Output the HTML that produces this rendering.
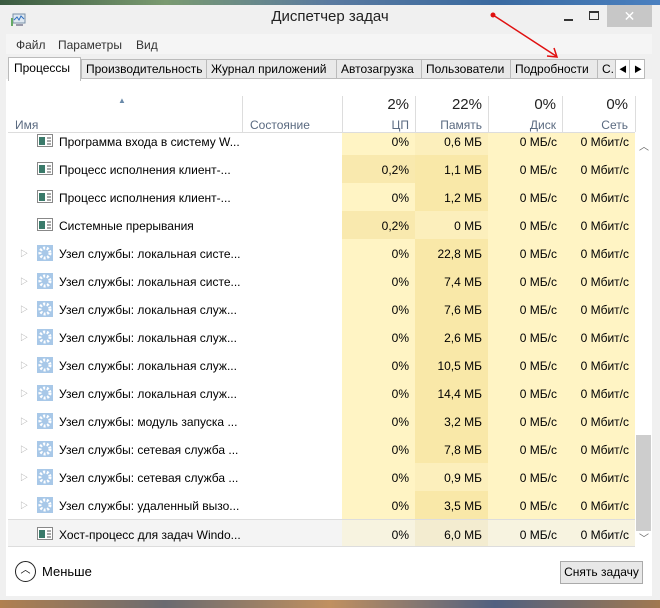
<!DOCTYPE html>
<html><head><meta charset="utf-8"><style>
*{margin:0;padding:0;box-sizing:border-box}
body{width:660px;height:608px;overflow:hidden;background:#8a7a60;font-family:"Segoe UI","Liberation Sans","Noto Sans CJK SC",sans-serif;font-size:12px;color:#000;position:relative}
.abs{position:absolute}
#top{left:0;top:0;width:660px;height:5px;background:linear-gradient(90deg,#3a5a40,#7a9a70,#5a7aa0,#3a6aa0,#4a80c0)}
#bot{left:0;top:600px;width:660px;height:8px;background:linear-gradient(90deg,#b08050,#6a6a70,#c09060,#506080,#a07850)}
#win{left:0;top:5px;width:660px;height:595px;background:#f0f0f0}
#title{left:0;top:8px;width:660px;text-align:center;font-size:15px;color:#222}
#menu{left:6px;top:34px;width:646px;height:20px;background:#f5f5f5}
#menu span{position:absolute;top:4px;color:#333;font-size:12px}
.tab{position:absolute;top:59px;height:20px;background:#e9e9e9;border:1px solid #bbb;font-size:12px;padding:2px 4px;white-space:nowrap;overflow:hidden}
#panel{left:6px;top:79px;width:646px;height:517px;background:#fff}
.colh{position:absolute;font-size:12px;color:#5a6a80}
.pct{position:absolute;font-size:15px;color:#222;text-align:right}
.row{position:absolute;left:8px;width:627px;height:28px}
.row span{position:absolute;top:8px;white-space:nowrap}
.c{position:absolute;top:0;height:28px}
</style></head><body>
<div id="top" class="abs"></div>
<div id="win" class="abs"></div>
<div id="bot" class="abs"></div>
<svg class="abs" style="left:10px;top:13px" width="16" height="14"><rect x="3" y="1" width="12" height="9" fill="#dfe8f0" stroke="#7890a8"/><polyline points="4,7 7,4 9,7 11,3 14,6" fill="none" stroke="#3070c0"/><rect x="1" y="5" width="2" height="8" fill="#6a6"/><rect x="6" y="11" width="7" height="2" fill="#99a"/></svg>
<div id="title" class="abs">Диспетчер задач</div>
<div class="abs" style="left:564px;top:19px;width:9px;height:2px;background:#333"></div>
<div class="abs" style="left:589px;top:11px;width:10px;height:9px;border:1px solid #333;border-top-width:2px"></div>
<div class="abs" style="left:607px;top:5px;width:45px;height:22px;background:#c7c7c7;color:#fff;text-align:center;font-size:14px;line-height:22px">✕</div>
<div id="menu" class="abs"><span style="left:10px">Файл</span><span style="left:52px">Параметры</span><span style="left:130px">Вид</span></div>
<div class="tab" style="left:81px;width:126px">Производительность</div>
<div class="tab" style="left:206px;width:131px">Журнал приложений</div>
<div class="tab" style="left:336px;width:86px">Автозагрузка</div>
<div class="tab" style="left:421px;width:90px">Пользователи</div>
<div class="tab" style="left:510px;width:88px">Подробности</div>
<div class="tab" style="left:597px;width:20px">С...</div>
<div class="tab" style="left:615px;width:15px;background:#fff;font-size:8px;padding:4px 3px">◀</div>
<div class="tab" style="left:629px;width:16px;background:#fff;font-size:8px;padding:4px 4px">▶</div>
<svg class="abs" style="left:490px;top:12px;z-index:5" width="80" height="50"><circle cx="3" cy="3" r="2.5" fill="#e01010"/><line x1="3" y1="3" x2="66" y2="44" stroke="#e01010" stroke-width="1.5"/><polyline points="57,44 67,45 64,36" fill="none" stroke="#e01010" stroke-width="1.5"/></svg>
<div id="panel" class="abs"></div>
<div class="abs" style="left:8px;top:57px;width:73px;height:24px;background:#fff;border:1px solid #bbb;border-bottom:none;padding:3px 5px;font-size:12px">Процессы</div>
<div class="abs" style="left:342px;top:90px;width:73px;height:456px;background:#fff4c4"></div>
<div class="abs" style="left:415px;top:90px;width:73px;height:456px;background:#fcefbc"></div>
<div class="abs" style="left:488px;top:90px;width:74px;height:456px;background:#fff4c4"></div>
<div class="abs" style="left:562px;top:90px;width:73px;height:456px;background:#fff4c4"></div>
<div class="abs" style="left:8px;top:90px;width:627px;height:42px;background:#fff"></div>
<div class="abs" style="left:242px;top:96px;width:1px;height:36px;background:#ddd"></div>
<div class="abs" style="left:342px;top:96px;width:1px;height:36px;background:#ddd"></div>
<div class="abs" style="left:415px;top:96px;width:1px;height:36px;background:#ddd"></div>
<div class="abs" style="left:488px;top:96px;width:1px;height:36px;background:#ddd"></div>
<div class="abs" style="left:562px;top:96px;width:1px;height:36px;background:#ddd"></div>
<div class="abs" style="left:635px;top:96px;width:1px;height:36px;background:#ddd"></div>
<div class="abs" style="left:8px;top:132px;width:627px;height:1px;background:#ddd"></div>
<div class="abs" style="left:118px;top:96px;font-size:8px;color:#6a8aaa">▲</div>
<div class="colh" style="left:15px;top:118px">Имя</div>
<div class="colh" style="left:250px;top:118px">Состояние</div>
<div class="pct" style="left:360px;top:96px;width:49px">2%</div><div class="colh" style="left:360px;top:118px;width:49px;text-align:right">ЦП</div>
<div class="pct" style="left:420px;top:96px;width:62px">22%</div><div class="colh" style="left:420px;top:118px;width:62px;text-align:right">Память</div>
<div class="pct" style="left:500px;top:96px;width:56px">0%</div><div class="colh" style="left:500px;top:118px;width:56px;text-align:right">Диск</div>
<div class="pct" style="left:570px;top:96px;width:58px">0%</div><div class="colh" style="left:570px;top:118px;width:58px;text-align:right">Сеть</div>
<div id="rows"></div>
<div class="abs" style="left:635px;top:133px;width:17px;height:413px;background:#fff"></div>
<div class="abs" style="left:636px;top:435px;width:15px;height:96px;background:#cdcdcd"></div>
<div class="abs" style="left:639px;top:138px;font-size:10px;color:#666">︿</div>
<div class="abs" style="left:639px;top:530px;font-size:10px;color:#666">﹀</div>
<div class="abs" style="left:8px;top:546px;width:627px;height:1px;background:#ddd"></div>
<div class="abs" style="left:15px;top:561px;width:21px;height:21px;border:1.5px solid #222;border-radius:50%;text-align:center;font-size:10px;line-height:18px">︿</div>
<div class="abs" style="left:42px;top:564px;font-size:13px">Меньше</div>
<div class="abs" style="left:560px;top:561px;width:83px;height:23px;background:#e8e8e8;border:1px solid #aaa;text-align:center;line-height:21px;font-size:12px">Снять задачу</div>
<script>
var d=[
["Программа входа в систему W...","0%","0,6 МБ",0,0],
["Процесс исполнения клиент-...","0,2%","1,1 МБ",0,1],
["Процесс исполнения клиент-...","0%","1,2 МБ",0,0],
["Системные прерывания","0,2%","0 МБ",0,1],
["Узел службы: локальная систе...","0%","22,8 МБ",1,0],
["Узел службы: локальная систе...","0%","7,4 МБ",1,0],
["Узел службы: локальная служ...","0%","7,6 МБ",1,0],
["Узел службы: локальная служ...","0%","2,6 МБ",1,0],
["Узел службы: локальная служ...","0%","10,5 МБ",1,0],
["Узел службы: локальная служ...","0%","14,4 МБ",1,0],
["Узел службы: модуль запуска ...","0%","3,2 МБ",1,0],
["Узел службы: сетевая служба ...","0%","7,8 МБ",1,0],
["Узел службы: сетевая служба ...","0%","0,9 МБ",1,0],
["Узел службы: удаленный вызо...","0%","3,5 МБ",1,0],
["Хост-процесс для задач Windo...","0%","6,0 МБ",0,0]];
var h="";
d.forEach(function(r,i){
var y=127+i*28;var top=Math.max(y,133);var hh=y+28-top;var last=i==14;
h+='<div class="row" style="top:'+top+'px;height:'+hh+'px;overflow:hidden'+(last?';background:#f4f4f4;border-top:1px solid #ddd':'')+'"><div style="position:absolute;left:0;top:'+(y-top)+'px;width:627px;height:28px">';
if(last){h+='<div class="c" style="left:334px;width:73px;background:#f7f3e0"></div><div class="c" style="left:407px;width:73px;background:#f3ecd0"></div><div class="c" style="left:480px;width:74px;background:#f7f3e0"></div><div class="c" style="left:554px;width:73px;background:#f7f3e0"></div>';}
else{if(r[4])h+='<div class="c" style="left:334px;width:73px;background:#f9e9ae"></div>';
var m=parseFloat(r[2].replace(",","."));if(m>=1)h+='<div class="c" style="left:407px;width:73px;background:#f9e8a8"></div>';}
if(r[3]){h+='<span style="left:12px;top:9px;color:#999;font-size:8px">▷</span><svg style="position:absolute;left:29px;top:6px" width="16" height="16"><rect width="16" height="16" fill="#a8c8e8"/><circle cx="8" cy="8" r="5" fill="none" stroke="#fff" stroke-width="3" stroke-dasharray="2 1.6"/><circle cx="8" cy="8" r="2" fill="#a8c8e8"/></svg>';}
else{h+='<svg style="position:absolute;left:29px;top:7px" width="16" height="13"><rect x=".5" y=".5" width="15" height="12" fill="#fff" stroke="#888"/><rect x="2" y="3" width="6" height="8" fill="#3a7a6a"/><line x1="10" y1="4" x2="14" y2="4" stroke="#555"/><line x1="10" y1="7" x2="14" y2="7" stroke="#555"/><line x1="10" y1="10" x2="14" y2="10" stroke="#555"/></svg>';}
h+='<span style="left:51px">'+r[0]+'</span>';
h+='<span style="right:226px">'+r[1]+'</span><span style="right:153px">'+r[2]+'</span><span style="right:78px">0 МБ/с</span><span style="right:6px">0 Мбит/с</span></div></div>';});
document.getElementById("rows").innerHTML=h;
</script>
</body></html>
